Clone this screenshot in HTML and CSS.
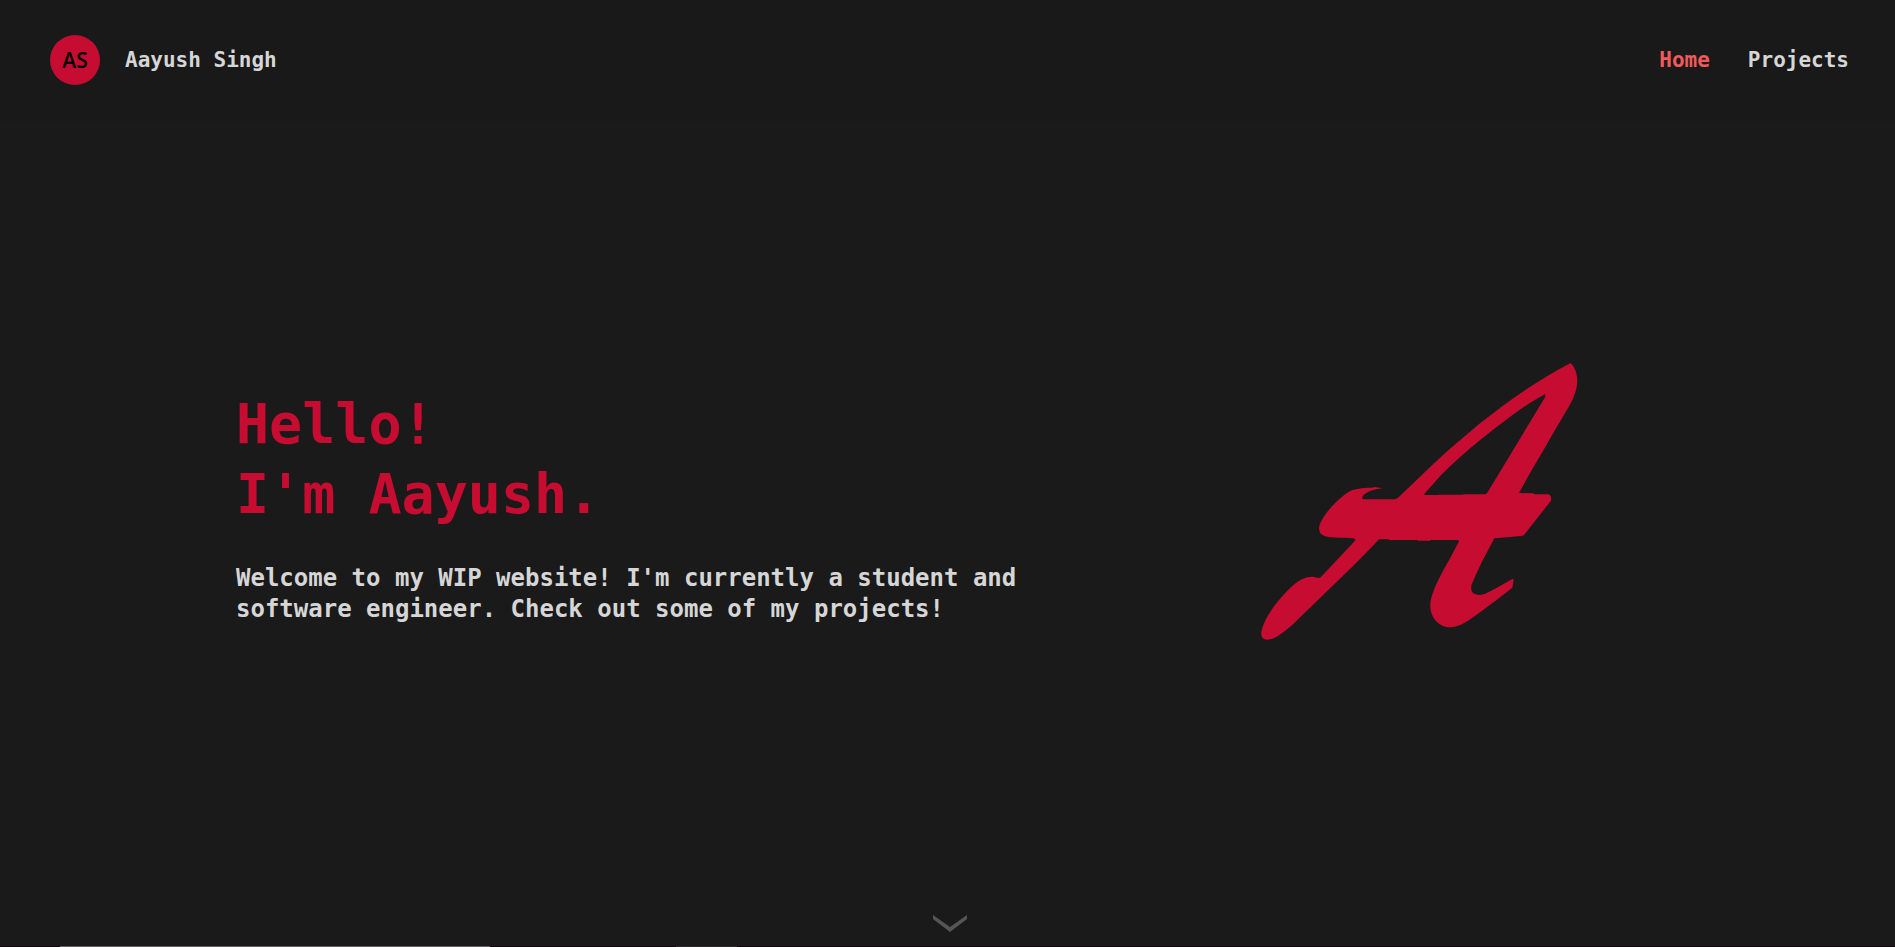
FILE: index.html
```html
<!DOCTYPE html>
<html lang="en">
<head>
<meta charset="utf-8">
<title>Aayush Singh</title>
<link rel="stylesheet" href="styles.css">
</head>
<body>
<header class="site-header">
  <a class="brand" href="#home">
    <span class="brand-mark">AS</span>
    <span class="brand-name">Aayush Singh</span>
  </a>
  <nav class="nav">
    <a class="nav-link nav-link-active" href="#home">Home</a>
    <a class="nav-link" href="#projects">Projects</a>
  </nav>
</header>
<main class="hero" id="home">
  <section class="intro">
    <h1 class="title">Hello!<br>I'm Aayush.</h1>
    <p class="lead">Welcome to my WIP website! I'm currently a student and software engineer. Check out some of my projects!</p>
  </section>
  <div class="art">
    <svg class="monogram" viewBox="0 0 1020 900" role="img" aria-label="Aayush monogram">
      <path fill-rule="evenodd" d="M962 39Q970 46 976 61Q990 94 971 141C963 163 920 230 890 284Q845 358 807 429L850 430L853 433H894Q906 436 903 452L822 555Q819 558 812 558L754 563L733 565L696 635Q676 676 667 699C656 722 670 735 688 735C705 735 722 722 745 711L788 686L791 690L787 713C760 735 720 764 690 787C656 812 630 832 600 832C570 832 540 805 541 765C543 722 580 661 604 618L627 574L624 570H541V572H502V570H417V568H387C350 609 300 657 262 694L148 804C112 840 75 870 52 869C35 869 30 855 36 837C47 797 85 748 118 716C145 691 168 678 192 681L206 684L212 682L270 620L317 570L311 565C270 562 240 564 222 557C205 551 203 532 214 513C231 478 285 427 308 420C326 414 345 413 366 413L374 411L399 415C376 417 340 426 336 444L339 448H436L444 443L500 390C560 330 625 274 690 220C777 151 855 95 962 39Z
      M885 132C878 138 854 149 835 162C735 231 620 324 560 390L522 433L526 435H564V434H640V433H705L711 430L886 140Z"/>
    </svg>
  </div>
</main>
<footer class="scroll-area">
  <a class="scroll-link" href="#projects" aria-label="Scroll to projects">
    <svg class="chevron" viewBox="0 0 34 17" aria-hidden="true"><path d="M0 0L17 12L34 0V4L17 17L0 4Z"/></svg>
  </a>
</footer>
<div class="projects-edge" id="projects"></div>
</body>
</html>
```

FILE: styles.css
```css
* { box-sizing: border-box; }

body {
  margin: 0;
  min-height: 100vh;
  display: flex;
  flex-direction: column;
  background: #1a1a1a;
  color: #d6d6d6;
  font-family: "DejaVu Sans Mono", monospace;
  font-weight: 700;
}

a { color: inherit; text-decoration: none; }

.site-header {
  display: flex;
  justify-content: space-between;
  align-items: center;
  padding: 35px 46px 37px 50px;
  background: #191919;
  font-size: 21px;
}

.brand { display: flex; align-items: center; gap: 25px; }

.brand-mark {
  width: 50px;
  height: 50px;
  display: grid;
  place-items: center;
  border-radius: 50%;
  background: #c60c30;
  color: #000;
  font-family: "Open Sans", sans-serif;
  font-size: 21px;
  font-weight: 600;
}

.nav { display: flex; gap: 38px; }
.nav-link-active { color: #f05a5a; }

.hero {
  flex: 1;
  display: grid;
  grid-template-columns: minmax(0, 800px) 1fr;
  gap: 214px;
  align-items: center;
  padding: 0 236px 38px;
}

.intro { padding-top: 14px; }

.title {
  margin: 0 0 34px;
  color: #c60c30;
  font-size: 55px;
  line-height: 70px;
}

.lead { margin: 0; font-size: 24px; line-height: 31px; }

.monogram { display: block; width: 340px; fill: #c60c30; }

.scroll-area { display: flex; justify-content: center; padding: 0 0 14px 4px; }
.scroll-link { display: block; }
.chevron { display: block; width: 34px; fill: #555; }

.projects-edge {
  height: 1px;
  background: linear-gradient(to right, #0e060a 60px, #656062 60px 490px, #0e060a 490px 676px, #2d282a 676px 737px, #0e060a 737px);
}
```
